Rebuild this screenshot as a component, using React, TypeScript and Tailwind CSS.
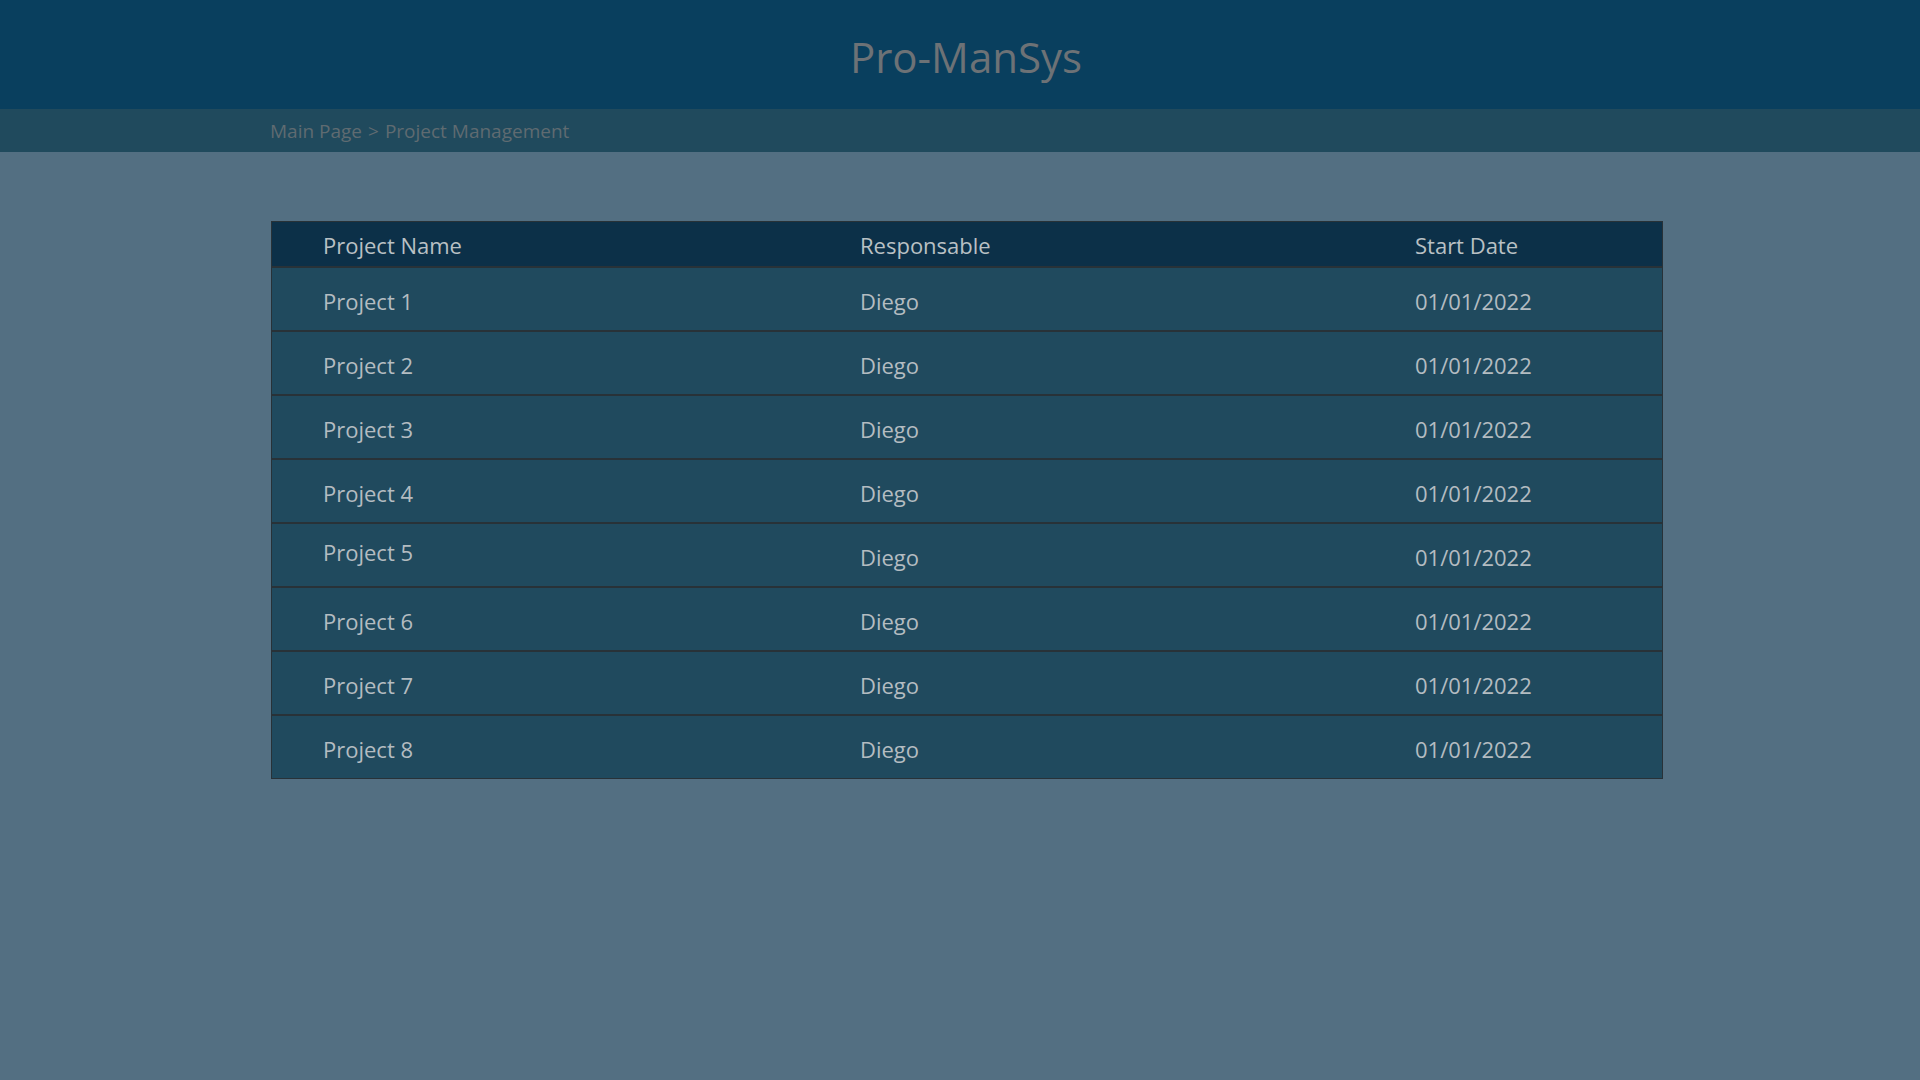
import React from "react";

const rows = [1, 2, 3, 4, 5, 6, 7, 8];

export default function App() {
  return (
    <div
      className="min-h-[1080px] w-full bg-[#536f82]"
      style={{ fontFamily: '"Segoe UI", "Open Sans", "Noto Sans", sans-serif' }}
    >
      <header className="flex h-[109px] items-center justify-center bg-[#093f5e] pl-[12px]">
        <h1 className="pt-[4px] text-[42px] font-normal leading-none text-[#6d7276]">Pro-ManSys</h1>
      </header>
      <nav className="flex h-[43px] items-center bg-[#204a5d] pl-[270px] pt-[2px] text-[19px] text-[#5f6b71]">
        <span>Main Page</span>
        <span className="mx-[6px]">&gt;</span>
        <span>Project Management</span>
      </nav>
      <main className="pl-[271px] pt-[69px]">
        <div className="w-[1392px] border border-[#283238] bg-[#204a5e] text-[22px] text-[#b4bcc1]">
          <div className="grid h-[46px] grid-cols-[537px_555px_1fr] items-center border-b-2 border-[#283238] bg-[#0c3048] pl-[51px] pt-[3px] text-[#b9c0c4]">
            <div>Project Name</div>
            <div>Responsable</div>
            <div>Start Date</div>
          </div>
          {rows.map((n, i) => (
            <div
              key={n}
              className={
                i < rows.length - 1
                  ? "grid h-[64px] grid-cols-[537px_555px_1fr] items-center border-b-2 border-[#283238] pl-[51px] pt-[4px]"
                  : "grid h-[62px] grid-cols-[537px_555px_1fr] items-center pl-[51px] pt-[4px]"
              }
            >
              <div className={n === 5 ? "-mt-[9px]" : ""}>Project {n}</div>
              <div>Diego</div>
              <div>01/01/2022</div>
            </div>
          ))}
        </div>
      </main>
    </div>
  );
}
